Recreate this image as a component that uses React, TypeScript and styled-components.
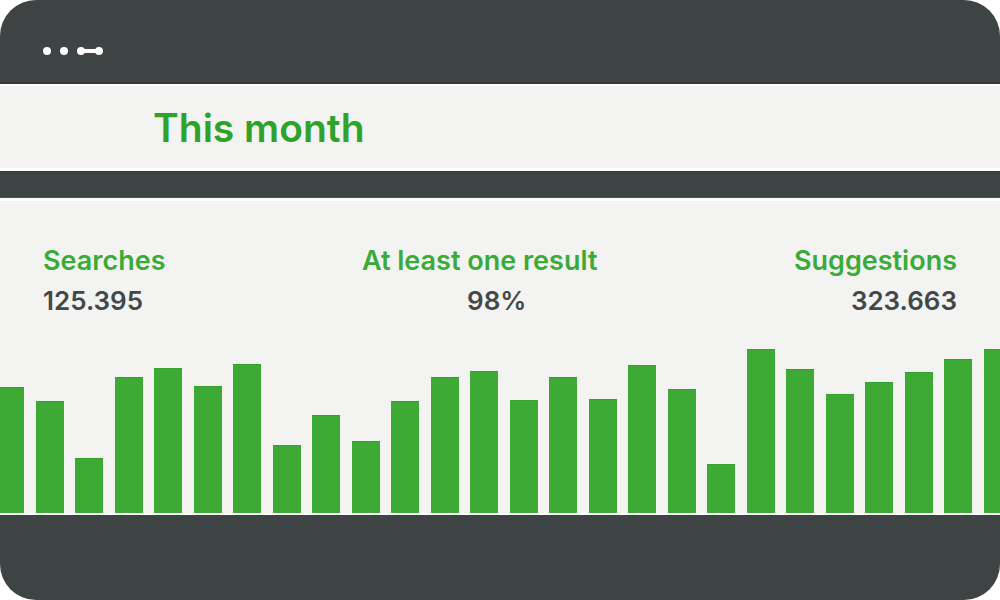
import React from "react"
import styled, { createGlobalStyle } from "styled-components"

const GlobalStyle = createGlobalStyle`
  html, body {
    margin: 0;
    padding: 0;
    background: #ffffff;
  }
  body {
    font-family: Inter, "Noto Sans", sans-serif;
  }
`

const Frame = styled.div`
  width: 1000px;
  height: 600px;
  background: #3e4343;
  border-radius: 36px;
  overflow: hidden;
  display: flex;
  flex-direction: column;
`

const TopBar = styled.div`
  height: 84px;
  flex-shrink: 0;
  box-sizing: border-box;
  padding: 42px 0 0 42px;
  border-bottom: 2px solid #343838;
`

const TitlePanel = styled.div`
  height: 82px;
  flex-shrink: 0;
  background: #f3f4f2;
  border-top: 2px solid #ffffff;
  border-bottom: 3px solid #ffffff;
  display: flex;
  align-items: center;
  padding-left: 153px;
`

const Title = styled.h1`
  margin: 0;
  font-size: 39px;
  font-weight: 600;
  color: #2fa22b;
`

const Band = styled.div`
  height: 25px;
  flex-shrink: 0;
  border-top: 1px solid #353939;
  border-bottom: 1px solid #4a4f4f;
`

const StatsPanel = styled.div`
  height: 312px;
  flex-shrink: 0;
  background: #f3f4f2;
  border-top: 3px solid #ffffff;
  border-bottom: 2px solid #ffffff;
  display: flex;
  flex-direction: column;
  justify-content: space-between;
  overflow: hidden;
`

const StatsRow = styled.div`
  display: flex;
  justify-content: space-between;
  padding: 40px 43px 0 43px;
`

const Stat = styled.div<{ $align: "left" | "center" | "right" }>`
  text-align: ${p => p.$align};
  line-height: 40px;
`

const Label = styled.div`
  font-size: 27px;
  font-weight: 600;
  color: #3aab37;
`

const Value = styled.div<{ $shift?: number }>`
  font-size: 26px;
  font-weight: 600;
  color: #434747;
  padding-left: ${p => p.$shift || 0}px;
`

const Chart = styled.div`
  display: flex;
  align-items: flex-end;
  gap: 11.5px;
  margin-left: -4px;
  height: 170px;
`

const Bar = styled.div`
  width: 28px;
  flex-shrink: 0;
  background: #3caa35;
  box-shadow: inset 0 1px 0 #33a12c;
`

const Footer = styled.div`
  flex: 1;
`

const WindowDots = () => (
  <svg width="64" height="12" viewBox="0 0 64 12">
    <circle cx="5" cy="5" r="4" fill="#ffffff" />
    <circle cx="22" cy="5" r="4" fill="#ffffff" />
    <circle cx="39" cy="5" r="4" fill="#ffffff" />
    <circle cx="57" cy="5" r="4" fill="#ffffff" />
    <rect x="39" y="3" width="18" height="4" fill="#ffffff" />
  </svg>
)

const stats = [
  { label: "Searches", value: "125.395", align: "left" as const },
  { label: "At least one result", value: "98%", align: "center" as const, shift: 34 },
  { label: "Suggestions", value: "323.663", align: "right" as const }
]

const bars = [
  126, 112, 55, 136, 145, 127, 149, 68, 98, 72, 112, 136, 142,
  113, 136, 114, 148, 124, 49, 164, 144, 119, 131, 141, 154, 164
]

export default function App() {
  return (
    <>
      <GlobalStyle />
      <Frame>
        <TopBar>
          <WindowDots />
        </TopBar>
        <TitlePanel>
          <Title>This month</Title>
        </TitlePanel>
        <Band />
        <StatsPanel>
          <StatsRow>
            {stats.map(s => (
              <Stat key={s.label} $align={s.align}>
                <Label>{s.label}</Label>
                <Value $shift={s.shift}>{s.value}</Value>
              </Stat>
            ))}
          </StatsRow>
          <Chart>
            {bars.map((h, i) => (
              <Bar key={i} style={{ height: h }} />
            ))}
          </Chart>
        </StatsPanel>
        <Footer />
      </Frame>
    </>
  )
}
